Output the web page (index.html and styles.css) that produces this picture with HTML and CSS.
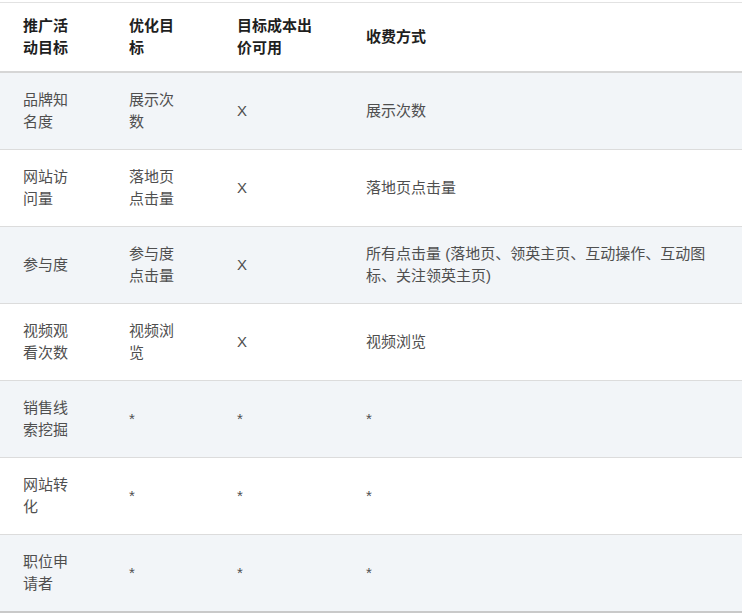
FILE: index.html
```html
<!DOCTYPE html>
<html lang="zh-CN">
<head>
<meta charset="utf-8">
<link rel="stylesheet" href="styles.css">
</head>
<body>
<table class="grid">
  <colgroup>
    <col class="c1"><col class="c2"><col class="c3"><col class="c4">
  </colgroup>
  <thead>
    <tr><th>推广活动目标</th><th>优化目标</th><th>目标成本出价可用</th><th>收费方式</th></tr>
  </thead>
  <tbody>
    <tr><td>品牌知名度</td><td>展示次数</td><td>X</td><td>展示次数</td></tr>
    <tr><td>网站访问量</td><td>落地页点击量</td><td>X</td><td>落地页点击量</td></tr>
    <tr><td>参与度</td><td>参与度点击量</td><td>X</td><td>所有点击量 (落地页、领英主页、互动操作、互动图标、关注领英主页)</td></tr>
    <tr><td>视频观看次数</td><td>视频浏览</td><td>X</td><td>视频浏览</td></tr>
    <tr><td>销售线索挖掘</td><td>*</td><td>*</td><td>*</td></tr>
    <tr><td>网站转化</td><td>*</td><td>*</td><td>*</td></tr>
    <tr><td>职位申请者</td><td>*</td><td>*</td><td>*</td></tr>
  </tbody>
</table>
</body>
</html>
```

FILE: styles.css
```css
html, body {
  margin: 0;
  padding: 0;
  background: #ffffff;
}
body {
  padding-top: 2px;
  font-family: "Liberation Sans", "Noto Sans CJK SC", sans-serif;
  font-size: 15px;
  line-height: 22px;
  color: #4f4f4f;
}
.grid {
  width: 742px;
  table-layout: fixed;
  border-collapse: collapse;
  border-top: 1px solid #e2e2e2;
  border-bottom: 2px solid #c9c9c9;
}
.c1 { width: 106px; }
.c2 { width: 108px; }
.c3 { width: 129px; }
.c4 { width: 399px; }
.grid th {
  text-align: left;
  font-weight: bold;
  color: #1f1f1f;
  padding: 12px 30px 12px 23px;
  border-bottom: 2px solid #d6d6d6;
  vertical-align: middle;
}
.grid td {
  padding: 16px 30px 16px 23px;
  border-bottom: 1px solid #dcdcdc;
  vertical-align: middle;
}
.grid tbody tr:nth-child(odd) td {
  background: #f2f5f8;
}
.grid tbody tr:last-child td {
  border-bottom: none;
}
```
